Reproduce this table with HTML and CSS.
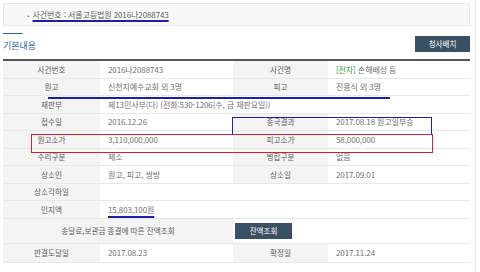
FILE: index.html
```html
<!DOCTYPE html>
<html lang="ko">
<head>
<meta charset="utf-8">
<link rel="stylesheet" href="styles.css">
</head>
<body>
<div class="page">
  <div class="case-box">
    <span class="dot">.</span>
    <span class="case-title">사건번호 : 서울고등법원 2016나2088743</span>
  </div>

  <div class="section-head">
    <h2 class="title">기본내용</h2>
    <button class="btn btn-map">청사배치</button>
  </div>

  <div class="info">
    <div class="lbl">사건번호</div>
    <div class="val">2016나2088743</div>
    <div class="lbl">사건명</div>
    <div class="val"><span class="green">[전자]</span>&nbsp;손해배상 등</div>

    <div class="lbl">원고</div>
    <div class="val">신천지예수교회 외 3명</div>
    <div class="lbl">피고</div>
    <div class="val">진용식 외 3명</div>

    <div class="lbl">재판부</div>
    <div class="val span3">제13민사부(다) (전화:530-1206(수, 금 재판요일))</div>

    <div class="lbl">접수일</div>
    <div class="val">2016.12.26</div>
    <div class="lbl">종국결과</div>
    <div class="val">2017.08.18 원고일부승</div>

    <div class="lbl">원고소가</div>
    <div class="val">3,110,000,000</div>
    <div class="lbl">피고소가</div>
    <div class="val">58,000,000</div>

    <div class="lbl">수리구분</div>
    <div class="val">제소</div>
    <div class="lbl">병합구분</div>
    <div class="val">없음</div>

    <div class="lbl">상소인</div>
    <div class="val">원고, 피고, 쌍방</div>
    <div class="lbl">상소일</div>
    <div class="val">2017.09.01</div>

    <div class="lbl">상소각하일</div>
    <div class="val span3"></div>

    <div class="lbl">인지액</div>
    <div class="val span3"><span class="mark">15,803,100원</span></div>

    <div class="lbl span2 tall">송달료,보관금 종결에 따른 잔액조회</div>
    <div class="val span2 tall btn-cell"><button class="btn">잔액조회</button></div>

    <div class="lbl last">판결도달일</div>
    <div class="val last">2017.08.23</div>
    <div class="lbl last">확정일</div>
    <div class="val last">2017.11.24</div>
  </div>

  <div class="anno anno-line"></div>
  <div class="anno anno-blue"></div>
  <div class="anno anno-red"></div>
</div>
</body>
</html>
```

FILE: styles.css
```css
* { box-sizing: border-box; }

html, body {
  margin: 0;
  padding: 0;
  background: #ffffff;
}

body {
  font-family: "Noto Sans CJK KR", "Noto Sans", sans-serif;
  font-size: 8px;
  color: #707070;
}

.page {
  position: relative;
  width: 476px;
  height: 272px;
  padding: 3px 5px 0 3px;
  border-right: 1px solid #e6e6e6;
}

.case-box {
  height: 23px;
  background: #f8f8f8;
  border: 1px solid #e8e8e8;
  display: flex;
  align-items: center;
  padding-left: 23px;
  color: #606060;
  font-size: 8px;
  letter-spacing: -0.1px;
}

.dot {
  margin-right: 3px;
  font-weight: bold;
  position: relative;
  top: -1px;
}

.case-title {
  text-decoration: underline;
  text-decoration-color: #1e1ea8;
  text-decoration-thickness: 1.5px;
  text-underline-offset: 2px;
}

.section-head {
  margin-top: 7px;
  margin-bottom: 7px;
  display: flex;
  justify-content: space-between;
  align-items: flex-end;
}

.title {
  margin: 0;
  font-size: 9px;
  font-weight: normal;
  color: #2f64a0;
  line-height: 12px;
}

.title::before {
  content: "";
  display: block;
  width: 20px;
  height: 1px;
  background: #2f64a0;
  margin-bottom: 6px;
}

.btn {
  border: 0;
  margin: 0;
  padding: 0;
  background: #3a5064;
  color: #ffffff;
  font-family: inherit;
  font-size: 7.5px;
  height: 16px;
  line-height: 16px;
}

.btn-map {
  width: 55px;
}

.info {
  display: grid;
  grid-template-columns: 97px 133px 95px 142px;
  border-top: 2px solid #555555;
}

.info > div {
  height: 17.5px;
  border-bottom: 1px solid #e8e8e8;
  display: flex;
  align-items: center;
  white-space: nowrap;
}

.lbl {
  background: #f4f4f4;
  justify-content: center;
  color: #5e5e5e;
  font-size: 7.6px;
}

.val {
  padding-left: 8px;
  background: #ffffff;
  font-size: 8px;
  letter-spacing: -0.1px;
}

.span3 { grid-column: span 3; }
.span2 { grid-column: span 2; }

.info > .tall { height: 25.5px; }
.info > .last { height: 18.5px; }

.btn-cell { padding-left: 2px; }
.btn-cell .btn { width: 57px; }

.green { color: #3a9a3a; }

.mark {
  text-decoration: underline;
  text-decoration-color: #1e1ea8;
  text-decoration-thickness: 1.5px;
  text-underline-offset: 3px;
}

.anno { position: absolute; }

.anno-line {
  left: 48px;
  top: 97px;
  width: 342px;
  height: 1.5px;
  background: #1e1ea8;
}

.anno-blue {
  left: 232px;
  top: 117px;
  width: 200px;
  height: 18px;
  border: 1.5px solid #1e1ea8;
}

.anno-red {
  left: 31px;
  top: 134px;
  width: 402px;
  height: 19px;
  border: 1.5px solid #d4202c;
}
```
